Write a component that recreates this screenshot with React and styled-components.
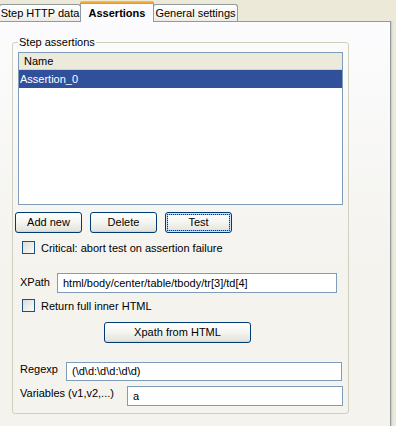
import styled, { createGlobalStyle, css } from "styled-components";

const Global = createGlobalStyle`
  html, body {
    margin: 0;
    padding: 0;
    background: #ece9d8;
  }
  body {
    font-family: Tahoma, "Liberation Sans", Arial, sans-serif;
    font-size: 11px;
    color: #000;
  }
`;

const Window = styled.div`
  width: 396px;
  height: 426px;
  display: flex;
  flex-direction: column;
  overflow: hidden;
  background: #ece9d8;
`;

const TabBar = styled.div`
  display: flex;
  align-items: flex-end;
  height: 21px;
  margin-left: -1px;
  position: relative;
  z-index: 1;
`;

const Tab = styled.div`
  box-sizing: border-box;
  width: ${(p) => p.$w}px;
  height: 17px;
  border: 1px solid #919b9c;
  border-bottom: none;
  border-radius: 3px 3px 0 0;
  background: linear-gradient(#ffffff, #f3f2ed 70%, #ecebe6);
  line-height: 16px;
  text-align: center;
  white-space: nowrap;
  margin-right: -1px;
  ${(p) =>
    p.$active &&
    css`
      height: 21px;
      margin-bottom: -1px;
      font-weight: bold;
      background: #fcfcfe;
      border-top: none;
      line-height: 18px;
      position: relative;
      z-index: 2;
      &::before {
        content: "";
        display: block;
        margin: 0 -1px;
        height: 3px;
        border-radius: 3px 3px 0 0;
        background: linear-gradient(#ffc83c, #e68b2c);
      }
    `}
`;

const Panel = styled.div`
  flex: 1;
  width: 391px;
  box-sizing: border-box;
  border-top: 1px solid #919b9c;
  border-right: 1px solid #919b9c;
  box-shadow: 1px 0 0 #d0cfc4, 2px 0 0 #e3e1d5;
  background: linear-gradient(#fcfcfe, #f4f3ee 60%);
  padding: 0 0 0 12px;
`;

const Group = styled.fieldset`
  box-sizing: border-box;
  width: 337px;
  height: 378px;
  margin: 14px 0 0 0;
  padding: 0;
  border: 1px solid #d0d0bf;
  border-radius: 3px;
  min-width: 0;
`;

const Legend = styled.legend`
  padding: 0 1px;
  margin-left: 5px;
  line-height: 12px;
  color: #000;
`;

const Table = styled.div`
  box-sizing: border-box;
  width: 325px;
  height: 153px;
  margin: 4px 0 0 5px;
  border: 1px solid #7f9db9;
  background: #fff;
`;

const HeaderCell = styled.div`
  height: 16px;
  line-height: 17px;
  padding-left: 5px;
  background: #ebeadb;
  border-bottom: 1px solid #d6d2c2;
`;

const RowItem = styled.div`
  height: 18px;
  line-height: 18px;
  padding-left: 1px;
  background: ${(p) => (p.$selected ? "#31509b" : "transparent")};
  color: ${(p) => (p.$selected ? "#fff" : "#000")};
`;

const Row = styled.div`
  display: flex;
  align-items: ${(p) => p.$align || "center"};
  margin: ${(p) => p.$top || 0}px 0 0 ${(p) => p.$left || 0}px;
  gap: ${(p) => p.$gap || 0}px;
`;

const Button = styled.button`
  box-sizing: border-box;
  width: ${(p) => p.$w}px;
  height: 21px;
  padding: 0;
  font: inherit;
  line-height: 19px;
  color: #000;
  border: 1px solid #003c74;
  border-radius: 3px;
  background: linear-gradient(#ffffff, #f4f4f0 50%, #e6e5de 90%, #d6d0c5);
  position: relative;
  ${(p) =>
    p.$default &&
    css`
      box-shadow: inset 0 0 0 1px #cee7ff, inset 0 0 0 2px #98b8ea;
      &::after {
        content: "";
        position: absolute;
        inset: 1px;
        border: 1px dotted #333;
        border-radius: 1px;
      }
    `}
`;

const Check = styled.span`
  box-sizing: border-box;
  display: inline-block;
  width: 13px;
  height: 13px;
  border: 1px solid #1c5180;
  background: linear-gradient(135deg, #dcdcd7, #fbfbf9);
  margin-right: 6px;
  flex: none;
`;

const Label = styled.span`
  width: ${(p) => (p.$w ? `${p.$w}px` : "auto")};
  margin-top: ${(p) => p.$dy || 0}px;
  flex: none;
  white-space: nowrap;
`;

const Input = styled.div`
  box-sizing: border-box;
  width: ${(p) => p.$w}px;
  height: ${(p) => p.$h || 20}px;
  border: 1px solid #7f9db9;
  background: #fff;
  padding-left: 5px;
  line-height: ${(p) => (p.$h || 20) - 2}px;
  white-space: nowrap;
  overflow: hidden;
`;

export default function App() {
  return (
    <>
      <Global />
      <Window>
        <TabBar>
          <Tab $w={82}>Step HTTP data</Tab>
          <Tab $w={74} $active>
            Assertions
          </Tab>
          <Tab $w={85}>General settings</Tab>
        </TabBar>
        <Panel>
          <Group>
            <Legend>Step assertions</Legend>
            <Table>
              <HeaderCell>Name</HeaderCell>
              <RowItem $selected>Assertion_0</RowItem>
            </Table>
            <Row $top={7} $left={2} $gap={8}>
              <Button $w={67}>Add new</Button>
              <Button $w={67}>Delete</Button>
              <Button $w={67} $default>
                Test
              </Button>
            </Row>
            <Row $top={8} $left={9}>
              <Check />
              <Label>Critical: abort test on assertion failure</Label>
            </Row>
            <Row $top={19} $left={7} $align="flex-start">
              <Label $w={37} $dy={3}>XPath</Label>
              <Input $w={280}>html/body/center/table/tbody/tr[3]/td[4]</Input>
            </Row>
            <Row $top={6} $left={9}>
              <Check />
              <Label>Return full inner HTML</Label>
            </Row>
            <Row $top={10} $left={91}>
              <Button $w={147}>Xpath from HTML</Button>
            </Row>
            <Row $top={19} $left={7} $align="flex-start">
              <Label $w={46} $dy={1}>Regexp</Label>
              <Input $w={276} $h={19}>(\d\d:\d\d:\d\d)</Input>
            </Row>
            <Row $top={5} $left={7} $align="flex-start">
              <Label $w={107} $dy={1}>Variables (v1,v2,...)</Label>
              <Input $w={216}>a</Input>
            </Row>
          </Group>
        </Panel>
      </Window>
    </>
  );
}
